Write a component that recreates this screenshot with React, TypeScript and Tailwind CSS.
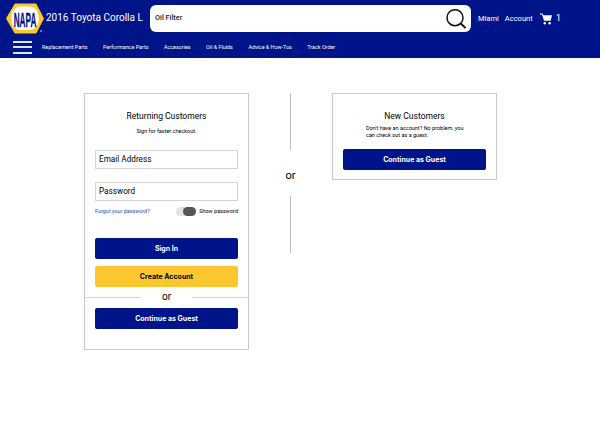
const font = "font-['Roboto',sans-serif]";

function NapaLogo() {
  return (
    <svg width="40" height="33" viewBox="0 0 40 33" className="shrink-0">
      <polygon points="9,1 30,1 37.5,15.5 30,30 9,30 0.5,15.5" fill="#fdc82f" strokeLinejoin="round" stroke="#fdc82f" strokeWidth="1" />
      <rect x="5.5" y="3.5" width="27" height="23.5" rx="9" fill="#fff" />
      <text transform="translate(19 24) scale(0.39 1)" textAnchor="middle" fontFamily="Liberation Sans, sans-serif" fontWeight="700" fontSize="21" fill="#001489" stroke="#001489" strokeWidth="0.4">NAPA</text>
      <circle cx="35" cy="28" r="0.8" fill="#dfe3f5" />
    </svg>
  );
}

function BlueButton({ label }: { label: string }) {
  return (
    <div className="flex h-[21px] items-center justify-center rounded-[2px] bg-[#001489] pt-[2px] font-['Inter',sans-serif] text-[7px] font-bold text-white">
      {label}
    </div>
  );
}

export default function App() {
  const links = ["Replacement Parts", "Performance Parts", "Accesories", "Oil & Fluids", "Advice & How-Tos", "Track Order"];
  return (
    <div className={`h-[426px] w-[600px] overflow-hidden bg-white ${font}`}>
      <header className="h-[58px] bg-[#001489] text-white">
        <div className="flex h-[38px] items-start pl-[6px] pt-[3px]">
          <NapaLogo />
          <span className="w-[104px] shrink-0 whitespace-nowrap pt-[7px] text-[10px] leading-[16px]">2016 Toyota Corolla L</span>
          <div className="mt-[2px] flex h-[27px] w-[321px] shrink-0 items-center justify-between rounded-[6px] bg-white pl-[5px] pr-[5px]">
            <span className="text-[7.3px] font-medium text-[#222]">Oil Filter</span>
            <svg width="20" height="20" viewBox="0 0 20 20" fill="none" stroke="#111" strokeWidth="1.5">
              <circle cx="9" cy="8.7" r="8" />
              <path d="M14.8 14.5 L19.5 19" strokeWidth="1.9" />
            </svg>
          </div>
          <span className="ml-[7px] mt-[10px] text-[7.5px] leading-[11px]">Miami</span>
          <span className="ml-[6px] mt-[10px] text-[7.5px] leading-[11px]">Account</span>
          <svg width="12" height="12" viewBox="0 0 12 12" className="ml-[7px] mt-[9.5px]" fill="#fff">
            <path d="M0 0.5 H2.5 L3.4 2.2 H12 L10.6 7.8 H4 L2 1.5 H0 Z" />
            <circle cx="4.8" cy="10.2" r="1.2" />
            <circle cx="9.6" cy="10.2" r="1.2" />
          </svg>
          <span className="ml-[4px] mt-[8px] text-[9.5px] leading-[14px]">1</span>
        </div>
        <div className="flex h-[18px] items-center pl-[13px]">
          <div className="flex w-[19px] flex-col gap-[3.5px]">
            <div className="h-[2px] bg-[#dfe3f5]" />
            <div className="h-[2px] bg-[#dfe3f5]" />
            <div className="h-[2px] bg-[#dfe3f5]" />
          </div>
          <nav className="ml-[10px] flex gap-[15.5px] text-[5.4px]">
            {links.map(l => <span key={l}>{l}</span>)}
          </nav>
        </div>
      </header>

      <main className="flex items-start pl-[84px] pt-[35px]">
        <section className="h-[257px] w-[165px] border border-[#c9c9c9] text-black">
          <h2 className="mt-[16px] text-center text-[8.5px] leading-[12px]">Returning Customers</h2>
          <p className="mt-[5px] text-center text-[5.5px] leading-[8px]">Sign for faster checkout.</p>
          <div className="mx-[10px] mt-[15px] flex h-[19px] items-center border border-[#d5d5d5] pl-[3px] text-[8.2px]">Email Address</div>
          <div className="mx-[10px] mt-[13px] flex h-[19px] items-center border border-[#d5d5d5] pl-[3px] text-[8.2px]">Password</div>
          <div className="mx-[10px] mt-[5px] flex h-[10px] items-center justify-between">
            <span className="text-[5.4px] text-[#1a4fa8]">Forgot your password?</span>
            <div className="flex items-center gap-[3px]">
              <div className="flex h-[9px] w-[20px] justify-end rounded-full bg-[#e3e3e3]">
                <div className="h-[9px] w-[13px] rounded-full bg-[#555]" />
              </div>
              <span className="text-[5.5px]">Show password</span>
            </div>
          </div>
          <div className="mx-[10px] mt-[22px]"><BlueButton label="Sign In" /></div>
          <div className="mx-[10px] mt-[7px] flex h-[21px] items-center justify-center rounded-[2px] bg-[#fdc82f] pt-[2px] font-['Inter',sans-serif] text-[7px] font-bold">Create Account</div>
          <div className="mt-[3px] flex h-[14px] items-center">
            <div className="h-px flex-1 bg-[#d5d5d5]" />
            <span className="w-[51px] text-center text-[10px] leading-none">or</span>
            <div className="h-px flex-1 bg-[#d5d5d5]" />
          </div>
          <div className="mx-[10px] mt-[4px]"><BlueButton label="Continue as Guest" /></div>
        </section>

        <div className="flex h-[161px] w-[83px] flex-col items-center">
          <div className="h-[57px] w-px bg-[#bdbdbd]" />
          <span className="mt-[18px] text-[11px] leading-[16px]">or</span>
          <div className="mt-[12px] h-[57px] w-px bg-[#bdbdbd]" />
        </div>

        <section className="h-[87px] w-[165px] border border-[#c9c9c9] text-black">
          <h2 className="mt-[16px] text-center text-[8.5px] leading-[12px]">New Customers</h2>
          <p className="ml-[33px] mr-[28px] mt-[3px] text-[5.5px] leading-[7px]">Don't have an account? No problem, you can check out as a guest.</p>
          <div className="mx-[10px] mt-[10px]"><BlueButton label="Continue as Guest" /></div>
        </section>
      </main>
    </div>
  );
}
